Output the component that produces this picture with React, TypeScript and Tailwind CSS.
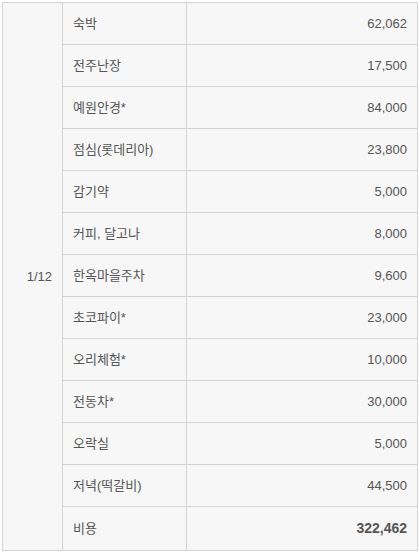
import React from "react";

const rows: [string, string][] = [
  ["숙박", "62,062"],
  ["전주난장", "17,500"],
  ["예원안경*", "84,000"],
  ["점심(롯데리아)", "23,800"],
  ["감기약", "5,000"],
  ["커피, 달고나", "8,000"],
  ["한옥마을주차", "9,600"],
  ["초코파이*", "23,000"],
  ["오리체험*", "10,000"],
  ["전동차*", "30,000"],
  ["오락실", "5,000"],
  ["저녁(떡갈비)", "44,500"],
];

export default function App() {
  const font = {
    fontFamily:
      '"Liberation Sans", Arial, "Noto Sans CJK KR", sans-serif',
  };
  return (
    <div className="bg-white w-[419px] h-[552px] pt-[2px] pl-[2px]" style={font}>
      <table className="border-collapse w-[416px] table-fixed text-[13px] text-[#555555]">
        <colgroup>
          <col className="w-[60px]" />
          <col className="w-[124px]" />
          <col />
        </colgroup>
        <tbody>
          {rows.map(([name, val], i) => (
            <tr key={i} className="h-[42px]">
              {i === 0 && (
                <td
                  rowSpan={13}
                  className="border border-[#d4d4d4] bg-[#f7f7f7] text-right pr-[10px] align-middle"
                >
                  1/12
                </td>
              )}
              <td className="border border-[#d4d4d4] bg-[#f7f7f7] pl-[10px] align-middle">
                {name}
              </td>
              <td className="border border-[#d4d4d4] bg-[#f7f7f7] text-right pr-[10px] align-middle">
                {val}
              </td>
            </tr>
          ))}
          <tr className="h-[44px]">
            <td className="border border-[#d4d4d4] bg-[#f7f7f7] pl-[10px] align-middle">
              비용
            </td>
            <td className="border border-[#d4d4d4] bg-[#f7f7f7] text-right pr-[10px] align-middle font-bold text-[14px]">
              322,462
            </td>
          </tr>
        </tbody>
      </table>
    </div>
  );
}
